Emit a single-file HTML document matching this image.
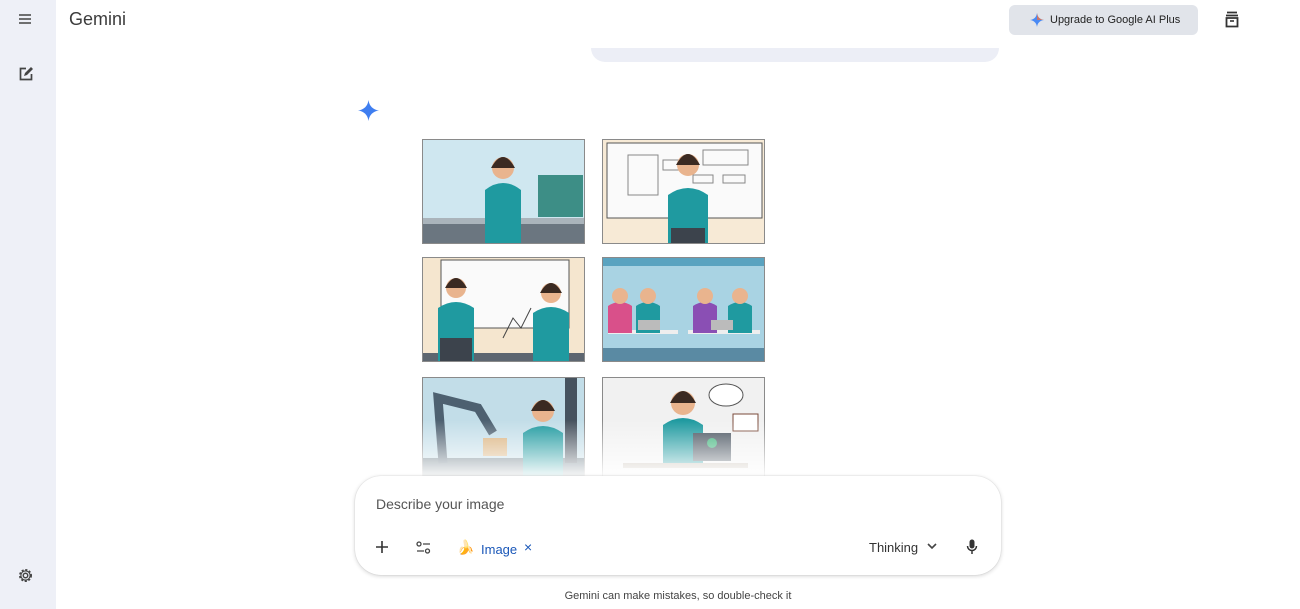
<!DOCTYPE html>
<html><head><meta charset="utf-8"><style>
*{margin:0;padding:0;box-sizing:border-box}
body{width:1300px;height:609px;overflow:hidden;background:#fff;font-family:"Liberation Sans",sans-serif;position:relative;color:#1f1f1f}
.side{position:absolute;left:0;top:0;width:56px;height:609px;background:#eef0f7}
.abs{position:absolute}
.img{position:absolute;width:163px;height:105px;border:1px solid #8a8a8a;overflow:hidden}
.fade{position:absolute;left:400px;top:420px;width:400px;height:70px;background:linear-gradient(rgba(255,255,255,0),#fff 85%)}
.box{position:absolute;left:355px;top:476px;width:646px;height:99px;border-radius:26px;background:#fff;box-shadow:0 1px 4px rgba(0,0,0,.18),0 0 1px rgba(0,0,0,.2)}
</style></head><body>
<div class="side"></div>
<svg class="abs" style="left:18px;top:13px" width="14" height="12"><path d="M1 2h12M1 6h12M1 10h12" stroke="#444" stroke-width="1.6"/></svg>
<svg class="abs" style="left:18px;top:66px" width="16" height="16" viewBox="0 0 16 16"><path d="M8 2.5H2.5v11h11V8" fill="none" stroke="#444" stroke-width="1.7"/><path d="M6 10l1-3 6-6 2 2-6 6z" fill="#444"/></svg>
<svg class="abs" style="left:17px;top:567px" width="17" height="17" viewBox="0 0 24 24"><circle cx="12" cy="12" r="3.2" fill="none" stroke="#444" stroke-width="2"/><circle cx="12" cy="12" r="8" fill="none" stroke="#444" stroke-width="2.4" stroke-dasharray="3 2.3"/><circle cx="12" cy="12" r="6.5" fill="none" stroke="#444" stroke-width="1.6"/></svg>
<div class="abs" style="left:69px;top:9px;font-size:18px;color:#3c3c3c">Gemini</div>
<div class="abs" style="left:1009px;top:5px;width:189px;height:30px;border-radius:6px;background:#e1e4ea"></div>
<svg class="abs" style="left:1030px;top:13px" width="14" height="14" viewBox="0 0 14 14"><path d="M7 0C7.5 4 10 6.5 14 7 10 7.5 7.5 10 7 14 6.5 10 4 7.5 0 7 4 6.5 6.5 4 7 0z" fill="#4a8af4"/><path d="M7 0C7.5 4 10 6.5 14 7H7z" fill="#e8714a" opacity=".8"/></svg>
<div class="abs" style="left:1050px;top:14px;font-size:11px;color:#222">Upgrade to Google AI Plus</div>
<svg class="abs" style="left:1224px;top:11px" width="16" height="17" viewBox="0 0 16 17"><path d="M3 1.5h10M2 4.5h12M2.5 7h11v8.5h-11z" fill="none" stroke="#333" stroke-width="1.8"/><path d="M6 10h4" stroke="#333" stroke-width="1.6"/></svg>
<div class="abs" style="left:591px;top:48px;width:408px;height:14px;border-radius:0 0 14px 14px;background:#eceef6"></div>
<svg class="abs" style="left:358px;top:100px" width="21" height="21" viewBox="0 0 14 14"><path d="M7 0C7.5 4 10 6.5 14 7 10 7.5 7.5 10 7 14 6.5 10 4 7.5 0 7 4 6.5 6.5 4 7 0z" fill="#3f7ef0"/></svg>

<div class="img" style="left:422px;top:139px;background:#cfe7f0">
<svg width="163" height="105"><rect y="82" width="163" height="23" fill="#6b7680"/><rect y="78" width="163" height="6" fill="#aab4bb"/><rect x="115" y="35" width="45" height="42" fill="#3d8e86"/><path d="M62 105V50q18-14 36 0v55z" fill="#1f9aa0"/><circle cx="80" cy="28" r="11" fill="#e9b48e"/><path d="M68 28q12-22 24 0" fill="#3b2a22"/></svg></div>
<div class="img" style="left:602px;top:139px;background:#f7ead6">
<svg width="163" height="105"><rect x="4" y="3" width="155" height="75" fill="#fafafa" stroke="#555"/><g stroke="#888" fill="none"><rect x="100" y="10" width="45" height="15"/><rect x="90" y="35" width="20" height="8"/><rect x="120" y="35" width="22" height="8"/><rect x="25" y="15" width="30" height="40"/><rect x="60" y="20" width="30" height="10"/></g><path d="M65 105V55q20-14 40 0v50z" fill="#1f9aa0"/><path d="M68 105V88h34v17z" fill="#3c434c"/><circle cx="85" cy="25" r="11" fill="#e9b48e"/><path d="M73 25q12-22 24 0" fill="#3b2a22"/></svg></div>
<div class="img" style="left:422px;top:257px;background:#f5e6cf">
<svg width="163" height="105"><rect x="18" y="2" width="128" height="68" fill="#fafafa" stroke="#555"/><rect y="95" width="163" height="10" fill="#5d6670"/><path d="M80 80l10-20 8 10 10-20" stroke="#444" fill="none"/><path d="M15 105V50q18-12 36 0v55z" fill="#1f9aa0"/><path d="M17 105V80h32v25z" fill="#3c434c"/><circle cx="33" cy="30" r="10" fill="#e9b48e"/><path d="M110 105V55q18-12 36 0v50z" fill="#1f9aa0"/><circle cx="128" cy="35" r="10" fill="#e9b48e"/><path d="M22 30q11-20 22 0M117 35q11-20 22 0" fill="#3b2a22"/></svg></div>
<div class="img" style="left:602px;top:257px;background:#a9d3e3">
<svg width="163" height="105"><rect width="163" height="8" fill="#5aa3c0"/><rect y="90" width="163" height="15" fill="#5a8aa3"/><rect x="5" y="72" width="70" height="4" fill="#eee"/><rect x="85" y="72" width="72" height="4" fill="#eee"/><path d="M5 75V48q12-8 24 0v27z" fill="#d9508a"/><path d="M33 75V48q12-8 24 0v27z" fill="#1f9aa0"/><path d="M90 75V48q12-8 24 0v27z" fill="#8a4fb4"/><path d="M125 75V48q12-8 24 0v27z" fill="#1f9aa0"/><g fill="#e9b48e"><circle cx="17" cy="38" r="8"/><circle cx="45" cy="38" r="8"/><circle cx="102" cy="38" r="8"/><circle cx="137" cy="38" r="8"/></g><g fill="#bbb"><rect x="35" y="62" width="22" height="10"/><rect x="108" y="62" width="22" height="10"/></g></svg></div>
<div class="img" style="left:422px;top:377px;background:#c2dde8;height:100px">
<svg width="163" height="100"><rect x="0" y="80" width="163" height="20" fill="#5a6e7a"/><path d="M20 85L15 20 55 30 70 55" stroke="#4d6070" stroke-width="9" fill="none"/><rect x="60" y="60" width="24" height="18" fill="#d9b07a"/><path d="M100 100V55q20-14 40 0v45z" fill="#1f9aa0"/><circle cx="120" cy="33" r="11" fill="#e9b48e"/><path d="M108 33q12-22 24 0" fill="#3b2a22"/><rect x="142" y="0" width="12" height="85" fill="#46525e"/></svg></div>
<div class="img" style="left:602px;top:377px;background:#f1f1f1;height:100px">
<svg width="163" height="100"><rect x="20" y="85" width="125" height="5" fill="#bdb2a6"/><path d="M60 85V47q20-14 40 0v38z" fill="#1f9aa0"/><circle cx="80" cy="25" r="12" fill="#e9b48e"/><path d="M67 25q13-24 26 0" fill="#3b2a22"/><rect x="90" y="55" width="38" height="28" fill="#47525e"/><circle cx="109" cy="65" r="5" fill="#3cb37a"/><ellipse cx="123" cy="17" rx="17" ry="11" fill="#fff" stroke="#555"/><rect x="130" y="36" width="25" height="17" fill="#fff" stroke="#7a4a3a"/></svg></div>
<div class="fade"></div>

<div class="box"></div>
<div class="abs" style="left:376px;top:496px;font-size:14px;color:#555">Describe your image</div>
<svg class="abs" style="left:375px;top:540px" width="14" height="14"><path d="M7 1v12M1 7h12" stroke="#333" stroke-width="1.6"/></svg>
<svg class="abs" style="left:416px;top:541px" width="15" height="13" viewBox="0 0 15 13"><circle cx="3" cy="3" r="2" fill="none" stroke="#444" stroke-width="1.3"/><path d="M7 3h7M1 10h7" stroke="#444" stroke-width="1.3"/><circle cx="11.5" cy="10" r="2" fill="none" stroke="#444" stroke-width="1.3"/></svg>
<div class="abs" style="left:457px;top:539px;font-size:14px">🍌</div>
<div class="abs" style="left:481px;top:542px;font-size:13px;color:#1a57b8">Image</div>
<div class="abs" style="left:524px;top:539px;font-size:14px;color:#1a57b8">×</div>
<div class="abs" style="left:869px;top:540px;font-size:13px;color:#333">Thinking</div>
<svg class="abs" style="left:927px;top:543px" width="10" height="7"><path d="M1 1l4 4 4-4" stroke="#444" stroke-width="1.6" fill="none"/></svg>
<svg class="abs" style="left:966px;top:539px" width="12" height="16" viewBox="0 0 12 16"><rect x="3.5" y="0.5" width="5" height="9" rx="2.5" fill="#333"/><path d="M1.5 7a4.5 4.5 0 0 0 9 0M6 11.5V15" stroke="#333" stroke-width="1.5" fill="none"/></svg>
<div class="abs" style="left:0;width:1356px;top:590px;text-align:center;font-size:11px;color:#444">Gemini can make mistakes, so double-check it</div>
</body></html>
